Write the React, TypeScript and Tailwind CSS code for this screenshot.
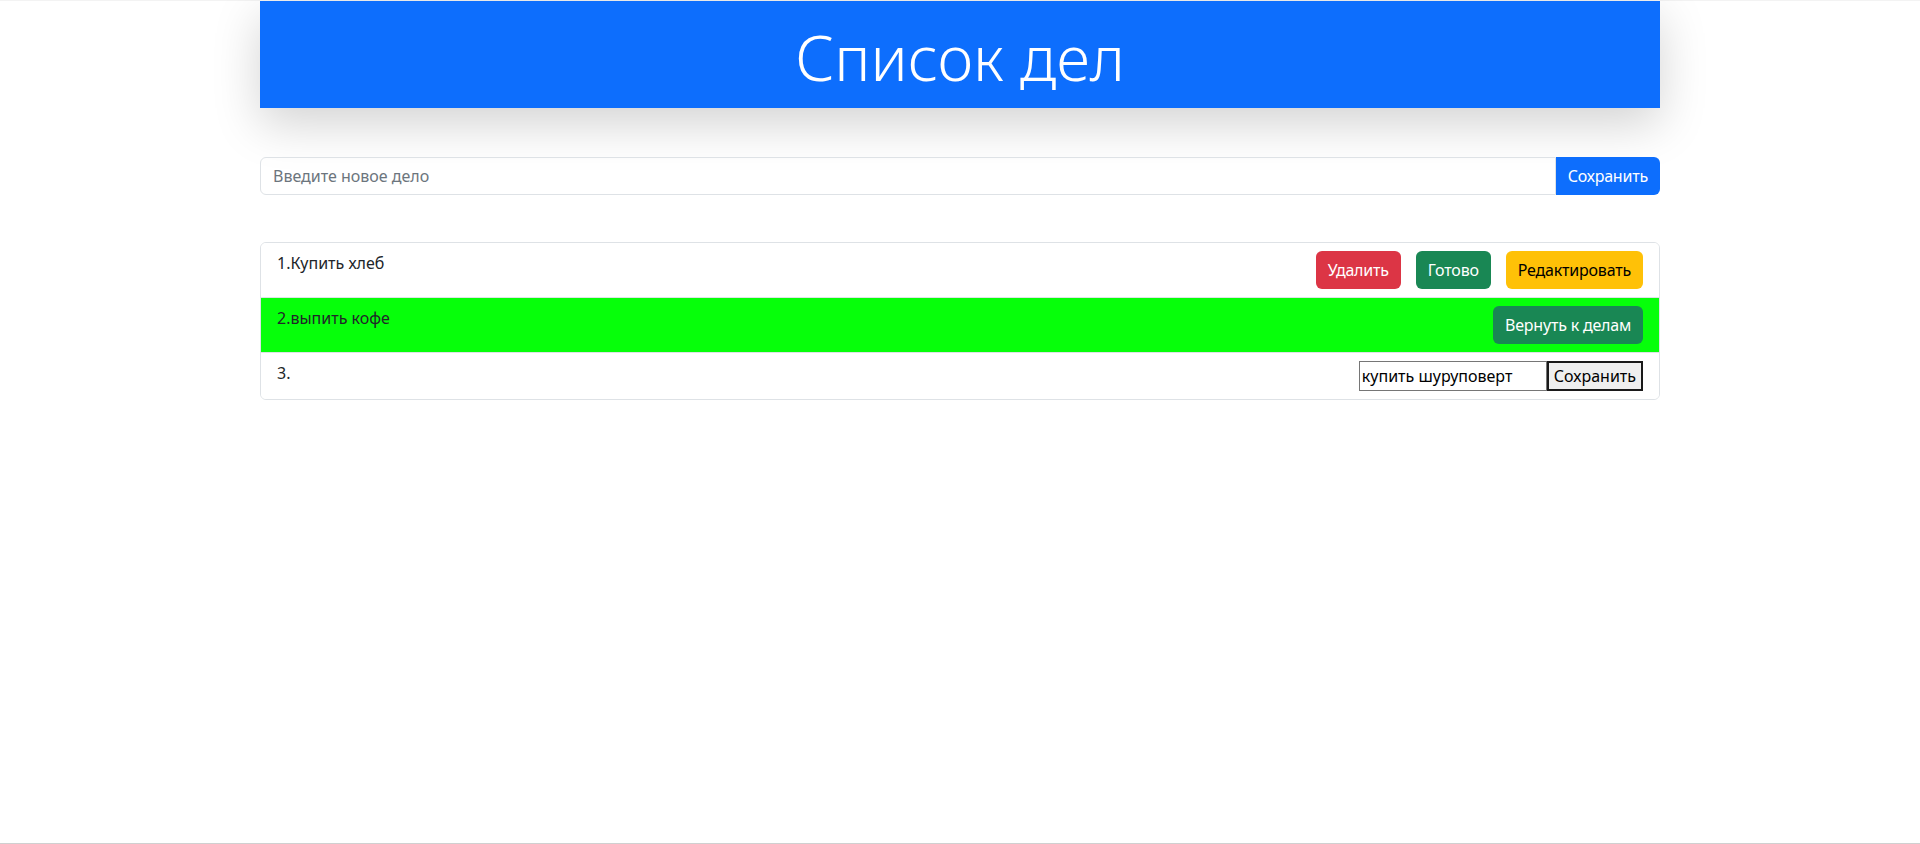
const FONT = "font-['Noto_Sans',_'Open_Sans',_sans-serif]";

type Todo = { id: number; title: string; done: boolean; editing: boolean };

const TODOS: Todo[] = [
  { id: 1, title: 'Купить хлеб', done: false, editing: false },
  { id: 2, title: 'выпить кофе', done: true, editing: false },
  { id: 3, title: 'купить шуруповерт', done: false, editing: true },
];

function TodoRow({ todo, index }: { todo: Todo; index: number }) {
  // done rows are painted bright green, edited rows show a raw input
  const rowBg = todo.done ? 'bg-[#06ff0a]' : 'bg-white';

  return (
    <li className={`flex items-start justify-between px-4 py-2 ${rowBg}`}>
      <span className="leading-6 text-[#212529]">
        {index + 1}.{todo.editing ? '' : todo.title}
      </span>

      {todo.editing ? (
        <div className="flex">
          <input
            defaultValue={todo.title}
            className="h-[30px] w-[188px] border border-[#767676] bg-white px-[2px] text-base text-black outline-none"
          />
          <button className="h-[30px] border-2 border-[#1a1a1a] bg-[#efefef] px-[5px] text-base leading-none text-black">
            Сохранить
          </button>
        </div>
      ) : todo.done ? (
        <button className="h-[38px] rounded-md bg-[#198754] px-3 leading-6 tracking-[-0.2px] text-white">
          Вернуть к делам
        </button>
      ) : (
        <div className="flex gap-[15px] tracking-[-0.2px]">
          <button className="h-[38px] rounded-md bg-[#dc3545] px-3 leading-6 text-white">Удалить</button>
          <button className="h-[38px] rounded-md bg-[#198754] px-3 leading-6 text-white">Готово</button>
          <button className="h-[38px] rounded-md bg-[#ffc107] px-3 leading-6 text-black">Редактировать</button>
        </div>
      )}
    </li>
  );
}

export default function App() {
  return (
    <div className={`h-[844px] border-t border-b border-t-[#f3f3f3] border-b-[#d0d0d0] bg-white ${FONT}`}>
      <div className="mx-auto w-[1400px]">
        {/* Header */}
        <header className="flex h-[107px] items-center justify-center bg-[#0d6efd] pt-1 shadow-[0_16px_48px_rgba(0,0,0,0.175)]">
          <h1 className="text-[62px] font-light leading-none text-white">Список дел</h1>
        </header>

        {/* New todo form */}
        <form className="mt-[49px] flex h-[38px]">
          <input
            placeholder="Введите новое дело"
            className="flex-1 rounded-l-md border border-[#dee2e6] px-3 text-base text-[#212529] outline-none placeholder:text-[#6c757d]"
          />
          <button type="button" className="rounded-r-md bg-[#0d6efd] px-3 text-base tracking-[-0.2px] text-white">
            Сохранить
          </button>
        </form>

        {/* Todo list */}
        <ul className="mt-[47px] divide-y divide-[#dee2e6] overflow-hidden rounded-md border border-[#dee2e6]">
          {TODOS.map((todo, i) => (
            <TodoRow key={todo.id} todo={todo} index={i} />
          ))}
        </ul>
      </div>
    </div>
  );
}
